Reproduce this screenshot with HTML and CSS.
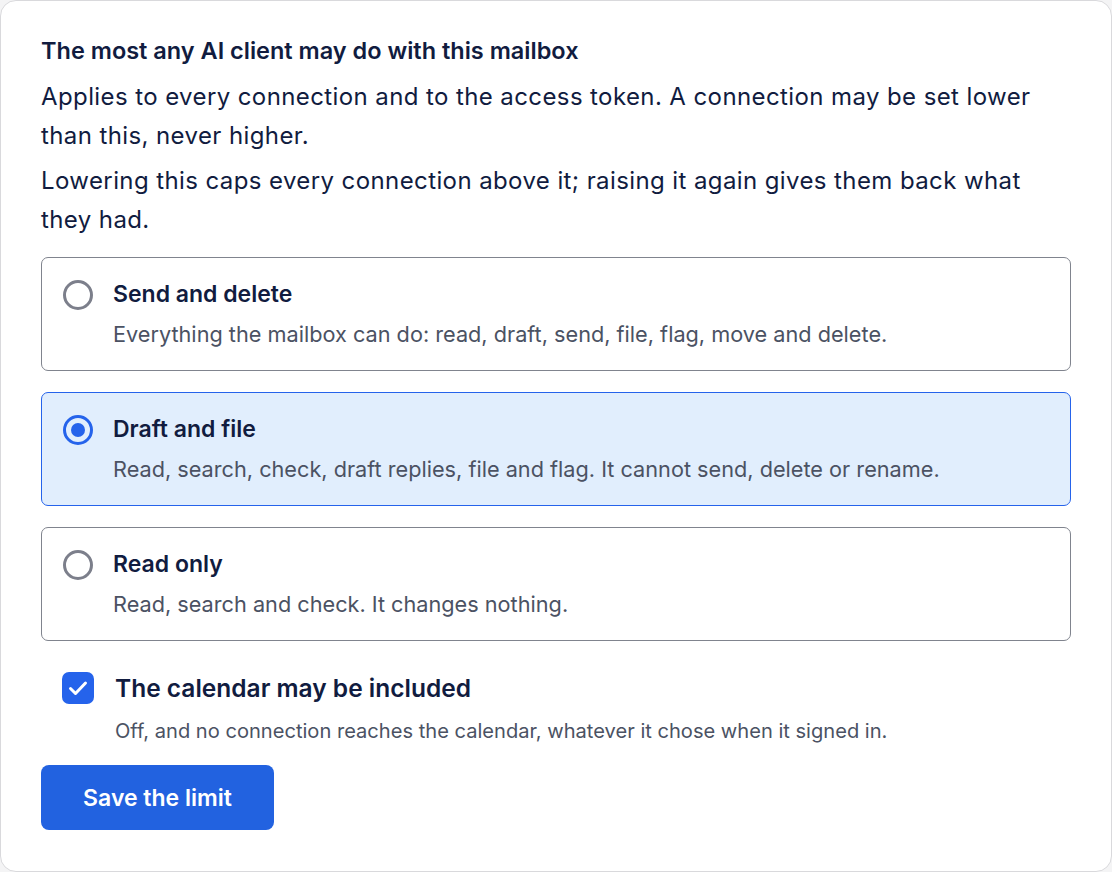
FILE: index.html
```html
<!DOCTYPE html>
<html lang="en">
<head>
    <meta charset="UTF-8">
    <meta name="viewport" content="width=device-width, initial-scale=1.0">
    <title>Mailbox limit</title>
    <link rel="stylesheet" href="styles.css">
</head>
<body>
    <div class="card">
        <h2 class="title">The most any AI client may do with this mailbox</h2>
        <p class="lead">Applies to every connection and to the access token. A connection may be set lower than this, never higher.</p>
        <p class="lead">Lowering this caps every connection above it; raising it again gives them back what they had.</p>

        <div class="options">
            <label class="option">
                <span class="radio"></span>
                <span class="option-text">
                    <span class="option-name">Send and delete</span>
                    <span class="option-desc">Everything the mailbox can do: read, draft, send, file, flag, move and delete.</span>
                </span>
            </label>
            <label class="option selected">
                <span class="radio"></span>
                <span class="option-text">
                    <span class="option-name">Draft and file</span>
                    <span class="option-desc">Read, search, check, draft replies, file and flag. It cannot send, delete or rename.</span>
                </span>
            </label>
            <label class="option">
                <span class="radio"></span>
                <span class="option-text">
                    <span class="option-name">Read only</span>
                    <span class="option-desc">Read, search and check. It changes nothing.</span>
                </span>
            </label>
        </div>

        <label class="check">
            <span class="box">
                <svg width="26" height="26" viewBox="0 0 26 26"><path d="M5.5 13.5l5 5L20.5 8" fill="none" stroke="#fff" stroke-width="3" stroke-linecap="round" stroke-linejoin="round"/></svg>
            </span>
            <span class="check-label">The calendar may be included</span>
        </label>
        <p class="check-hint">Off, and no connection reaches the calendar, whatever it chose when it signed in.</p>

        <button class="save">Save the limit</button>
    </div>
</body>
</html>
```

FILE: styles.css
```css
* {
    box-sizing: border-box;
}
body {
    margin: 0;
    font-family: Inter, "Noto Sans", sans-serif;
    color: #111c3f;
    background: #f4f4f5;
}
.card {
    width: 1112px;
    height: 872px;
    background: #fff;
    border: 1px solid #d9d9dc;
    border-radius: 16px;
    padding: 36px 40px 0;
}
.title {
    margin: 0;
    font-size: 23.5px;
    line-height: 28px;
    font-weight: 600;
}
.lead {
    margin: 12px 0 0;
    width: 1010px;
    font-size: 24px;
    line-height: 39px;
    letter-spacing: 0.4px;
    font-weight: 400;
}
.lead + .lead {
    margin-top: 6px;
}
.options {
    display: flex;
    flex-direction: column;
    gap: 21px;
    margin-top: 18px;
    width: 1030px;
}
.option {
    display: flex;
    align-items: flex-start;
    gap: 20px;
    padding: 21px;
    border: 1px solid #80848e;
    border-radius: 7px;
    background: #fff;
    cursor: pointer;
}
.option.selected {
    border-color: #2563eb;
    background: #e1eefd;
}
.radio {
    flex: none;
    width: 30px;
    height: 30px;
    margin-top: 1px;
    border: 3px solid #7c7f8b;
    border-radius: 50%;
    display: flex;
    align-items: center;
    justify-content: center;
}
.selected .radio {
    border-color: #2563eb;
}
.selected .radio::after {
    content: "";
    width: 14px;
    height: 14px;
    border-radius: 50%;
    background: #2563eb;
}
.option-text {
    display: flex;
    flex-direction: column;
    gap: 10px;
}
.option-name {
    font-size: 23px;
    line-height: 30px;
    font-weight: 600;
}
.option-desc {
    font-size: 21.7px;
    line-height: 30px;
    color: #4b5263;
}
.check {
    display: flex;
    align-items: center;
    gap: 21px;
    margin: 31px 0 0 21px;
}
.box {
    width: 32px;
    height: 32px;
    border-radius: 7px;
    background: #2563eb;
    display: flex;
    align-items: center;
    justify-content: center;
}
.check-label {
    font-size: 24.5px;
    line-height: 32px;
    font-weight: 600;
}
.check-hint {
    margin: 14px 0 0 74px;
    font-size: 20.1px;
    line-height: 26px;
    color: #4b5263;
}
.save {
    margin-top: 21px;
    width: 233px;
    height: 65px;
    border: none;
    border-radius: 8px;
    background: #2262e0;
    color: #fff;
    font-family: inherit;
    font-size: 23px;
    font-weight: 600;
}
```
